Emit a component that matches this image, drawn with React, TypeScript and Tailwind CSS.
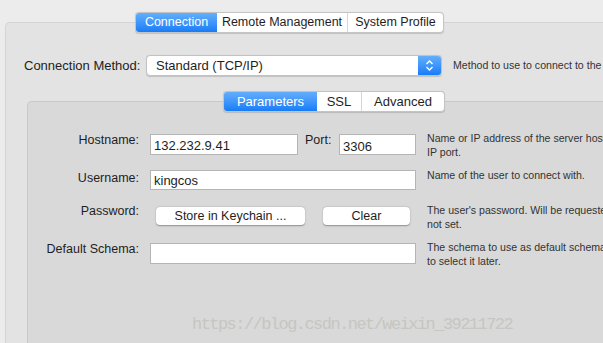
export default function App() {
  const font = { fontFamily: '"Liberation Sans", Arial, sans-serif' };

  return (
    <div
      className="relative w-[603px] h-[343px] overflow-hidden bg-[#ececec] text-[#1e1e1e]"
      style={font}
    >
      {/* outer panel */}
      <div className="ml-[5px] mt-[22px] w-[640px] h-[400px] rounded-tl-[5px] border-t border-l border-[#d4d4d4] bg-[#e3e3e3]">
        {/* top tabs */}
        <div className="-mt-[11px] ml-[129px] flex h-[21px] w-[309px] overflow-hidden rounded-[4px] border border-[#c4c4c4] bg-white text-[12.5px] shadow-[0_0.5px_1px_rgba(0,0,0,0.15)]">
          <div className="flex w-[81px] shrink-0 items-center justify-center bg-gradient-to-b from-[#62aefc] to-[#157cf7] text-white">
            Connection
          </div>
          <div className="flex w-[131px] shrink-0 items-center justify-center border-r border-[#d6d6d6]">
            Remote Management
          </div>
          <div className="flex flex-1 items-center justify-center">System Profile</div>
        </div>

        {/* connection method */}
        <div className="mt-[22px] flex items-center">
          <span className="ml-[18px] w-[122px] shrink-0 text-[13px]">Connection Method:</span>
          <div className="flex h-[21px] w-[296px] shrink-0 overflow-hidden rounded-[4px] border border-[#c2c2c2] bg-white shadow-[0_0.5px_1px_rgba(0,0,0,0.15)]">
            <span className="flex-1 pl-[9px] text-[13px] leading-[19px]">Standard (TCP/IP)</span>
            <div className="flex w-[23px] items-center justify-center bg-gradient-to-b from-[#62aefc] to-[#157cf7]">
              <svg width="9" height="13" viewBox="0 0 9 13" fill="none" stroke="white" strokeWidth="1.4">
                <path d="M1.5 5 L4.5 2 L7.5 5" />
                <path d="M1.5 8 L4.5 11 L7.5 8" />
              </svg>
            </div>
          </div>
          <span className="ml-[11px] shrink-0 whitespace-nowrap text-[10.6px] text-[#333]">
            Method to use to connect to the RDBMS
          </span>
        </div>

        {/* inner panel */}
        <div className="ml-[21px] mt-[25px] h-[300px] w-[620px] rounded-tl-[5px] border-t border-l border-[#c9c9c9] bg-[#d9d9d9]">
          <div className="-mt-[11px] ml-[195px] flex h-[21px] w-[222px] overflow-hidden rounded-[4px] border border-[#c4c4c4] bg-white text-[13px] shadow-[0_0.5px_1px_rgba(0,0,0,0.15)]">
            <div className="flex w-[93px] shrink-0 items-center justify-center bg-gradient-to-b from-[#62aefc] to-[#157cf7] text-white">
              Parameters
            </div>
            <div className="flex w-[45px] shrink-0 items-center justify-center border-r border-[#d6d6d6]">SSL</div>
            <div className="flex flex-1 items-center justify-center">Advanced</div>
          </div>

          {/* hostname */}
          <div className="mt-[22px] flex h-[21px] items-start">
            <span className="-mt-[1px] w-[111px] shrink-0 text-right text-[12.5px] leading-[15px]">Hostname:</span>
            <input
              readOnly
              value="132.232.9.41"
              className="ml-[11px] h-[21px] w-[148px] shrink-0 border border-[#b5b5b5] bg-white px-[3px] pt-[2px] text-[13px] outline-none"
            />
            <span className="-mt-[1px] ml-[7px] w-[28px] shrink-0 text-[12.5px] leading-[15px]">Port:</span>
            <input
              readOnly
              value="3306"
              className="ml-[6px] h-[21px] w-[77px] shrink-0 border border-[#b5b5b5] bg-white px-[3px] pt-[3px] text-[13px] outline-none"
            />
            <div className="-mt-[3px] ml-[11px] shrink-0 whitespace-nowrap text-[10.6px] leading-[14px] text-[#333]">
              <div>Name or IP address of the server host - and TCP/</div>
              <div>IP port.</div>
            </div>
          </div>

          {/* username */}
          <div className="mt-[15px] flex h-[20px] items-start">
            <span className="mt-[1px] w-[111px] shrink-0 text-right text-[12.5px] leading-[15px]">Username:</span>
            <input
              readOnly
              value="kingcos"
              className="ml-[11px] h-[20px] w-[266px] shrink-0 border border-[#b5b5b5] bg-white px-[3px] pt-[1px] text-[13px] outline-none"
            />
            <div className="-mt-[2px] ml-[11px] shrink-0 whitespace-nowrap text-[10.6px] leading-[14px] text-[#333]">
              Name of the user to connect with.
            </div>
          </div>

          {/* password */}
          <div className="mt-[15px] flex h-[20px] items-start">
            <span className="-mt-[1px] w-[111px] shrink-0 text-right text-[12.5px] leading-[15px]">Password:</span>
            <button className="ml-[17px] mt-[2px] h-[18px] w-[149px] shrink-0 rounded-[4px] bg-white text-[12.5px] shadow-[0_0.5px_1.5px_rgba(0,0,0,0.35)]">
              Store in Keychain ...
            </button>
            <button className="ml-[18px] mt-[2px] h-[18px] w-[87px] shrink-0 rounded-[4px] bg-white text-[12.5px] shadow-[0_0.5px_1.5px_rgba(0,0,0,0.35)]">
              Clear
            </button>
            <div className="-mt-[2px] ml-[17px] shrink-0 whitespace-nowrap text-[10.6px] leading-[14px] text-[#333]">
              <div>The user's password. Will be requested later if it's</div>
              <div>not set.</div>
            </div>
          </div>

          {/* default schema */}
          <div className="mt-[18px] flex h-[21px] items-start">
            <span className="-mt-[1px] w-[111px] shrink-0 text-right text-[12.5px] leading-[15px]">Default Schema:</span>
            <input
              readOnly
              value=""
              className="ml-[11px] h-[21px] w-[266px] shrink-0 border border-[#b5b5b5] bg-white px-[3px] text-[13px] outline-none"
            />
            <div className="-mt-[3px] ml-[11px] shrink-0 whitespace-nowrap text-[10.6px] leading-[14px] text-[#333]">
              <div>The schema to use as default schema. Leave blank</div>
              <div>to select it later.</div>
            </div>
          </div>
        </div>
      </div>

      {/* watermark */}
      <div
        className="pointer-events-none absolute left-[192px] top-[312px] whitespace-nowrap text-[17px] tracking-[-1.55px] text-[#c6c6c2]"
        style={{ fontFamily: '"Liberation Mono", monospace' }}
      >
        https://blog.csdn.net/weixin_39211722
      </div>
    </div>
  );
}
